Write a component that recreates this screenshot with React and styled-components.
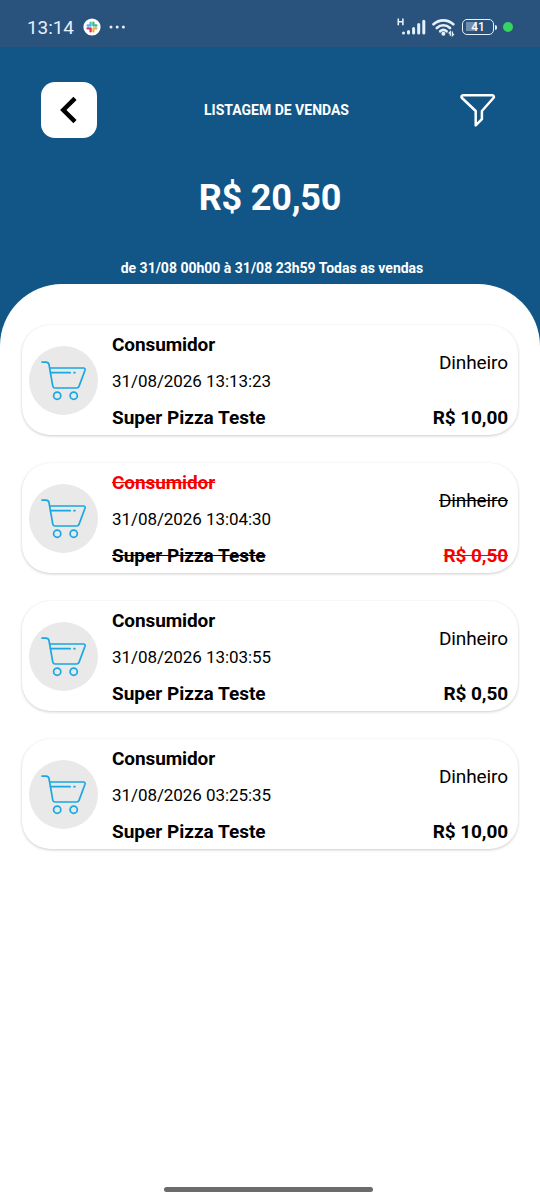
import styled, { createGlobalStyle } from "styled-components";

const sales = [
  {
    customer: "Consumidor",
    date: "31/08/2026 13:13:23",
    store: "Super Pizza Teste",
    payment: "Dinheiro",
    total: "R$ 10,00",
  },
  {
    customer: "Consumidor",
    date: "31/08/2026 13:04:30",
    store: "Super Pizza Teste",
    payment: "Dinheiro",
    total: "R$ 0,50",
    canceled: true,
  },
  {
    customer: "Consumidor",
    date: "31/08/2026 13:03:55",
    store: "Super Pizza Teste",
    payment: "Dinheiro",
    total: "R$ 0,50",
  },
  {
    customer: "Consumidor",
    date: "31/08/2026 03:25:35",
    store: "Super Pizza Teste",
    payment: "Dinheiro",
    total: "R$ 10,00",
  },
];

const SlackIcon = () => (
  <svg width="18" height="18" viewBox="0 0 18 18">
    <circle cx="9" cy="9" r="8.6" fill="#fff" />
    <g strokeWidth="2.3" strokeLinecap="round" fill="none">
      <path d="M7.6 4.6v3M4.6 7.5h2.6" stroke="#43bfe8" />
      <path d="M10.4 4.6v3M13.4 7.5h-1" stroke="#3fb68b" />
      <path d="M10.5 10.4h2.9M10.4 12.2v1.2" stroke="#e8b33c" />
      <path d="M4.6 10.4h1M7.6 10.4v3" stroke="#dc2b62" />
    </g>
  </svg>
);

const DotsIcon = () => (
  <svg width="18" height="4" viewBox="0 0 18 4" fill="#e4f0fb">
    <circle cx="2" cy="2" r="1.5" />
    <circle cx="8.2" cy="2" r="1.5" />
    <circle cx="14.4" cy="2" r="1.5" />
  </svg>
);

const SignalIcon = () => (
  <svg width="30" height="20" viewBox="0 0 30 20">
    <path
      d="M1.3 1.4v6.8M5.9 1.4v6.8M1.3 4.8h4.6"
      stroke="#e4f0fb"
      strokeWidth="1.6"
      fill="none"
    />
    <g stroke="#e4f0fb" strokeWidth="3" strokeLinecap="round">
      <path d="M6.5 16v.1M11.5 14.6v1.5M16.6 11.5v4.6M21.7 7.6v8.5M26.8 4.3v11.8" />
    </g>
  </svg>
);

const WifiIcon = () => (
  <svg width="24" height="19" viewBox="0 0 24 19">
    <g stroke="#e4f0fb" strokeWidth="2.6" fill="none" strokeLinecap="round">
      <path d="M1.5 6.3C7.2 1 15.6 1 21.3 6.3" />
      <path d="M4.8 10c3.8-3.6 9.4-3.6 13.2 0" />
      <path d="M8.2 13.3c1.9-1.7 4.5-1.7 6.4 0" />
    </g>
    <circle cx="11.4" cy="15.7" r="2" fill="#e4f0fb" />
    <path
      d="M18.3 17.8v-4l-1.6 1.7M20.4 13.6v4l1.6-1.7"
      stroke="#e4f0fb"
      strokeWidth="1.3"
      fill="none"
    />
  </svg>
);

const BackIcon = () => (
  <svg width="56" height="56" viewBox="0 0 56 56">
    <path
      d="M34 16.3 22.3 28 34 39.7"
      stroke="#000"
      strokeWidth="4.5"
      fill="none"
    />
  </svg>
);

const FilterIcon = () => (
  <svg width="38" height="36" viewBox="0 0 38 36">
    <path
      d="M4.1 3.2h29.2c1.5 0 2.2 1.7 1.1 2.8L22.9 19v8.2l-6.2 6.2V19L3 6C1.9 4.9 2.6 3.2 4.1 3.2z"
      stroke="#fff"
      strokeWidth="2.5"
      strokeLinejoin="round"
      fill="none"
    />
  </svg>
);

const CartIcon = () => (
  <svg width="69" height="69" viewBox="0 0 69 69">
    <g
      stroke="#1aa7e2"
      strokeWidth="1.7"
      fill="none"
      strokeLinecap="round"
      strokeLinejoin="round"
    >
      <path d="M13 16.1h3.8c1.9 0 2.9.8 3.2 2.6l3.8 21.4c.3 1.3 1 1.9 2.3 1.9h21.5c1.2 0 2-.5 2.4-1.6l6-16.1c.4-1.4-.2-2.3-1.6-2.3H20.6" />
      <path d="M21.6 26.7h19.6M45 26.7h.9" />
      <circle cx="28.2" cy="49.7" r="3.6" />
      <circle cx="44.7" cy="49.7" r="3.6" />
    </g>
  </svg>
);

const SaleCard = ({ sale }) => (
  <Card>
    <Avatar>
      <CartIcon />
    </Avatar>
    <Info>
      <Name $canceled={sale.canceled}>{sale.customer}</Name>
      <DateText>{sale.date}</DateText>
      <Store $canceled={sale.canceled}>{sale.store}</Store>
    </Info>
    <Values>
      <Payment $canceled={sale.canceled}>{sale.payment}</Payment>
      <Total $canceled={sale.canceled}>{sale.total}</Total>
    </Values>
  </Card>
);

const App = () => {
  return (
    <Screen>
      <GlobalStyle />
      <StatusBar>
        <Clock>13:14</Clock>
        <SlackIcon />
        <DotsIcon />
        <StatusRight>
          <SignalIcon />
          <WifiIcon />
          <Battery>
            <BatteryBody>41</BatteryBody>
            <BatteryTip />
          </Battery>
          <PrivacyDot />
        </StatusRight>
      </StatusBar>
      <Header>
        <TopRow>
          <BackButton aria-label="Voltar">
            <BackIcon />
          </BackButton>
          <Title>LISTAGEM DE VENDAS</Title>
          <FilterButton aria-label="Filtrar">
            <FilterIcon />
          </FilterButton>
        </TopRow>
        <Amount>R$ 20,50</Amount>
        <Period>de 31/08 00h00 à 31/08 23h59 Todas as vendas</Period>
      </Header>
      <Sheet>
        {sales.map((sale) => (
          <SaleCard key={sale.date} sale={sale} />
        ))}
        <HomeBar />
      </Sheet>
    </Screen>
  );
};

export default App;

const GlobalStyle = createGlobalStyle`
  * {
    box-sizing: border-box;
  }
  body {
    margin: 0;
    font-family: Roboto, sans-serif;
    color: #000;
  }
  svg {
    display: block;
    flex-shrink: 0;
  }
`;

const Screen = styled.div`
  display: flex;
  flex-direction: column;
  width: 540px;
  height: 1200px;
  overflow: hidden;
  background: #125687;
`;

const StatusBar = styled.div`
  display: flex;
  align-items: center;
  height: 47px;
  padding: 7px 27px 0 27px;
  background: #29527c;
`;

const Clock = styled.span`
  width: 56px;
  padding-top: 1px;
  font-size: 19px;
  line-height: 24px;
  letter-spacing: -0.1px;
  color: #e4f0fb;
  & + svg + svg {
    margin-left: 8px;
  }
`;

const StatusRight = styled.div`
  display: flex;
  align-items: center;
  margin-left: auto;
  svg + svg {
    margin-left: 5px;
  }
`;

const Battery = styled.div`
  display: flex;
  align-items: center;
  margin-left: 6px;
`;

const BatteryBody = styled.div`
  width: 32px;
  height: 16px;
  border: 1.5px solid #e4f0fb;
  border-radius: 5px;
  font-size: 12px;
  font-weight: 500;
  line-height: 15px;
  text-align: center;
  color: #fff;
  background: linear-gradient(90deg, #6f8fb0 10px, transparent 10px) 3px 2px /
    24px 9px no-repeat;
`;

const BatteryTip = styled.div`
  width: 2px;
  height: 5px;
  margin-left: 1px;
  border-radius: 0 2px 2px 0;
  background: #e4f0fb;
`;

const PrivacyDot = styled.div`
  width: 10px;
  height: 10px;
  margin-left: 6px;
  border-radius: 50%;
  background: #35d461;
`;

const Header = styled.div`
  display: flex;
  flex-direction: column;
  align-items: center;
  height: 237px;
  padding-top: 35px;
  color: #fff;
`;

const TopRow = styled.div`
  display: flex;
  align-items: center;
  justify-content: space-between;
  width: 100%;
  padding: 0 43px 0 41px;
`;

const BackButton = styled.button`
  width: 56px;
  height: 56px;
  padding: 0;
  border: none;
  border-radius: 14px;
  background: #fff;
`;

const Title = styled.h1`
  margin: 0 3px 0 0;
  font-size: 14px;
  font-weight: 700;
  line-height: 18px;
`;

const FilterButton = styled.button`
  padding: 0;
  border: none;
  background: none;
`;

const Amount = styled.div`
  margin-top: 38px;
  font-size: 36px;
  font-weight: 700;
  line-height: 44px;
  letter-spacing: -0.2px;
`;

const Period = styled.div`
  margin-top: 39px;
  padding-left: 4px;
  font-size: 14px;
  font-weight: 700;
  line-height: 18px;
`;

const Sheet = styled.div`
  display: flex;
  flex: 1;
  flex-direction: column;
  gap: 28px;
  padding: 41px 22px 8px;
  border-radius: 62px 62px 0 0;
  background: #fff;
`;

const Card = styled.div`
  display: flex;
  align-items: center;
  height: 110px;
  padding: 0 10px 0 7px;
  border-radius: 28px;
  background: #fff;
  box-shadow: 0 1px 3px rgba(0, 0, 0, 0.2), 0 0 1px rgba(0, 0, 0, 0.04);
`;

const Avatar = styled.div`
  width: 69px;
  height: 69px;
  border-radius: 50%;
  background: #e9e9e9;
`;

const Info = styled.div`
  flex: 1;
  margin-left: 14px;
  padding-top: 2px;
  line-height: 37px;
`;

const Values = styled.div`
  padding-top: 2px;
  text-align: right;
  line-height: 37px;
`;

const Store = styled.div`
  font-size: 19px;
  font-weight: 700;
  text-decoration: ${({ $canceled }) => ($canceled ? "line-through" : "none")};
`;

const Name = styled(Store)`
  letter-spacing: -0.1px;
  color: ${({ $canceled }) => ($canceled ? "#f60000" : "#000")};
`;

const Total = styled(Name)``;

const DateText = styled.div`
  font-size: 17px;
  line-height: 36px;
  letter-spacing: -0.07px;
`;

const Payment = styled.div`
  font-size: 19px;
  line-height: 73px;
  letter-spacing: -0.1px;
  text-decoration: ${({ $canceled }) => ($canceled ? "line-through" : "none")};
`;

const HomeBar = styled.div`
  width: 209px;
  height: 5px;
  margin: auto 0 0 141.5px;
  border-radius: 3px;
  background: #6b6b6b;
`;
